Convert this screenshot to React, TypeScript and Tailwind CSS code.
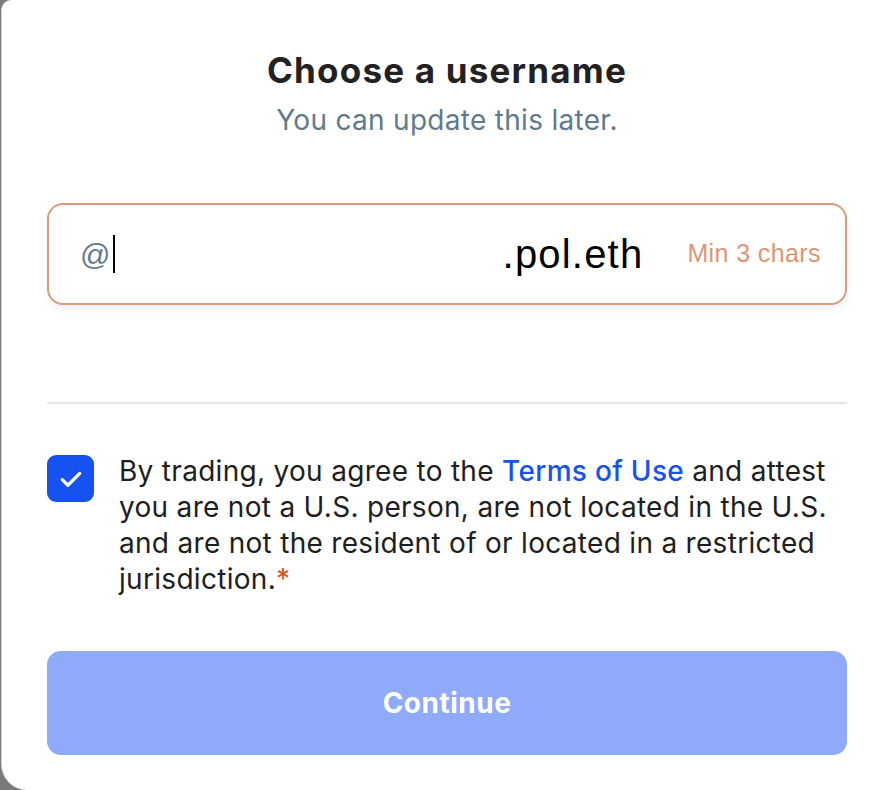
import React from "react";

export default function App() {
  return (
    <div className="w-[884px] h-[790px] bg-[#7a7a7a] flex" style={{ fontFamily: "Inter, 'Liberation Sans', sans-serif" }}>
      <div className="flex-1 ml-px bg-white rounded-tl-[10px] rounded-bl-[26px] border-l border-[#d6d6d6] flex flex-col pl-[45px] pr-[37px]">
        <h1 className="mt-[48px] text-center text-[35px] leading-[44px] font-bold text-[#222222] tracking-[1.2px]">
          Choose a username
        </h1>
        <p className="mt-[10px] text-center text-[28px] leading-[36px] text-[#5f7a8b] tracking-[0.3px]">
          You can update this later.
        </p>

        <div className="mt-[65px] h-[102px] rounded-[16px] border-2 border-[#dd9a7c] bg-white shadow-[0_3px_8px_rgba(0,0,0,0.07)] flex items-center pl-[31px] pr-[24px]">
          <span className="text-[30px] text-[#617a8a] tracking-[0.5px]" style={{ fontFamily: "'Liberation Sans', Arial, sans-serif" }}>@</span>
          <span className="ml-[2px] w-[2px] h-[38px] bg-black" />
          <span className="flex-1" />
          <span className="text-[40px] text-black tracking-[1.2px]" style={{ fontFamily: "'Liberation Sans', Arial, sans-serif" }}>.pol.eth</span>
          <span className="ml-[44px] text-[25px] text-[#dc9672] tracking-[0.4px]" style={{ fontFamily: "'Liberation Sans', Arial, sans-serif" }}>Min 3 chars</span>
        </div>

        <div className="mt-[97px] h-[2px] bg-[#e6e6e6]" />

        <div className="mt-[49px] flex items-start gap-[25px]">
          <div className="mt-[2px] w-[47px] h-[47px] shrink-0 rounded-[9px] bg-[#1652f0] flex items-center justify-center">
            <svg width="30" height="30" viewBox="0 0 24 24" fill="none" stroke="white" strokeWidth="2.6" strokeLinecap="round" strokeLinejoin="round">
              <path d="M5 12.5l4.5 4.5L19 7.5" />
            </svg>
          </div>
          <p className="text-[28px] leading-[36px] text-[#1e1e1e] tracking-[0.3px] max-w-[722px]">
            By trading, you agree to the <span className="text-[#1652f0] font-medium">Terms of Use</span> and attest you are not a U.S. person, are not located in the U.S. and are not the resident of or located in a restricted jurisdiction.<span className="text-[#e0521d]">*</span>
          </p>
        </div>

        <button className="mt-[54px] h-[104px] rounded-[14px] bg-[#8eaaf9] text-white text-[28px] font-bold tracking-[0.5px]">
          Continue
        </button>
      </div>
    </div>
  );
}
